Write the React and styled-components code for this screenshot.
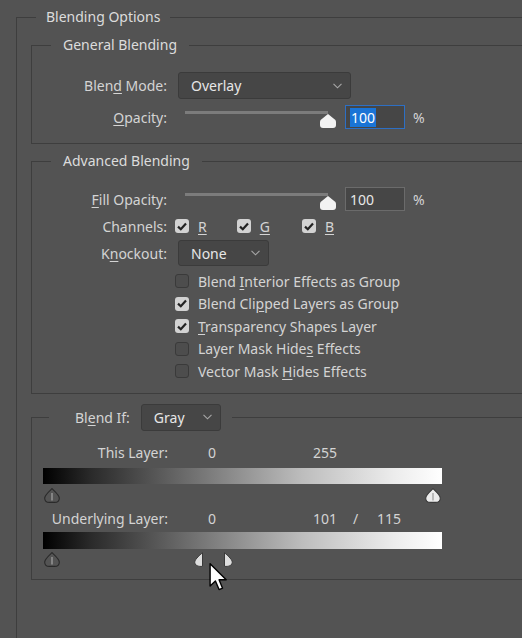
import styled, { createGlobalStyle } from "styled-components";

const Global = createGlobalStyle`
  html, body {
    margin: 0;
    background: #535353;
    overflow: hidden;
  }
  body {
    font-family: "Noto Sans", "Open Sans", sans-serif;
    font-size: 14px;
    color: #d4d4d4;
  }
`;

const Page = styled.div`
  position: relative;
  width: 522px;
  height: 638px;
  overflow: hidden;
  padding-top: 7px;
  box-sizing: border-box;
`;

const Outer = styled.fieldset`
  margin: 0 0 0 16px;
  width: 640px;
  min-height: 700px;
  border: 1px solid #3e3e3e;
  padding: 8px 0 0 14px;
  box-sizing: border-box;
`;

const Title = styled.legend`
  margin-left: 5px;
  padding: 0 10px;
  line-height: 20px;
  color: #dcdcdc;
`;

const Group = styled.fieldset`
  margin: ${(p) => p.$mt || 0}px 0 0 0;
  border: 1px solid #3e3e3e;
  padding: ${(p) => p.$pt}px 0 ${(p) => p.$pb}px ${(p) => p.$pl || 0}px;
  min-width: 0;
`;

const GroupTitle = styled.legend`
  margin-left: 19px;
  padding: 0 12px;
  line-height: 20px;
  color: #dcdcdc;
`;

const BlendIfLegend = styled.legend`
  margin-left: 17px;
  padding: 0 11px 0 26px;
  display: flex;
  align-items: center;
  gap: 11px;
`;

const Row = styled.div`
  display: flex;
  align-items: center;
  height: ${(p) => p.$h}px;
  margin-top: ${(p) => p.$mt || 0}px;
`;

const Label = styled.div`
  width: 135px;
  margin-right: 8px;
  text-align: right;
  white-space: nowrap;
`;

const Select = styled.div`
  display: flex;
  align-items: center;
  justify-content: space-between;
  box-sizing: border-box;
  width: ${(p) => p.$w}px;
  height: ${(p) => p.$h || 27}px;
  margin-left: ${(p) => p.$ml || 0}px;
  padding: 0 8px 0 12px;
  background: #464646;
  border: 1px solid #3b3b3b;
  border-radius: 3px;
  color: #e6e6e6;
`;

const Chevron = () => (
  <svg width="9" height="6" viewBox="0 0 9 6">
    <path d="M0.5 0.8 L4.5 4.8 L8.5 0.8" fill="none" stroke="#a8a8a8" strokeWidth="1.1" />
  </svg>
);

const SliderBox = styled.div`
  display: flex;
  flex-direction: column;
  width: 161px;
  height: 24px;
`;

const Track = styled.div`
  margin: 6px 0 0 10px;
  width: 143px;
  height: 3px;
  background: #7c7c7c;
`;

const SliderThumb = styled.svg`
  display: block;
  width: 16px;
  height: 14px;
`;

const NumInput = styled.div`
  display: flex;
  align-items: center;
  box-sizing: border-box;
  width: 60px;
  height: 24px;
  margin-left: 9px;
  padding-left: 4px;
  background: #464646;
  border: 1px solid ${(p) => (p.$focus ? "#2d6fc4" : "#6b6b6b")};
  color: #e8e8e8;
`;

const Selected = styled.span`
  background: #1a74d6;
  color: #ffffff;
  padding: 0 1px;
  line-height: 19px;
`;

const Percent = styled.span`
  margin-left: 8px;
`;

const Box = styled.div`
  box-sizing: border-box;
  width: 14px;
  height: 14px;
  border-radius: 3px;
  display: flex;
  align-items: center;
  justify-content: center;
  flex-shrink: 0;
  background: ${(p) => (p.$on ? "#d2d2d2" : "#4d4d4d")};
  border: ${(p) => (p.$on ? "none" : "1.5px solid #3a3a3a")};
`;

const Check = styled.label`
  display: flex;
  align-items: center;
  gap: 9px;
  white-space: nowrap;
  margin-right: ${(p) => p.$mr || 0}px;
`;

const Channel = styled.span`
  text-decoration: underline;
  text-underline-offset: 2px;
`;

const U = styled.u`
  text-underline-offset: 2px;
`;

const List = styled.div`
  display: flex;
  flex-direction: column;
  margin: 4px 0 0 143px;
`;

const ListRow = styled.div`
  height: 22.5px;
  display: flex;
  align-items: center;
`;

const Values = styled.div`
  display: grid;
  grid-template-columns: 136px 40px 105px 40px 24px 40px;
  align-items: center;
  height: 20px;
  margin-top: ${(p) => p.$mt || 0}px;
`;

const ValueLabel = styled.span`
  text-align: right;
  white-space: nowrap;
`;

const Gradient = styled.div`
  margin: ${(p) => p.$mt}px 0 0 11px;
  width: 399px;
  height: ${(p) => p.$h}px;
  background: linear-gradient(to right, #000 0%, #2a2a2a 12%, #777 40%, #bdbdbd 65%, #ececec 88%, #fff 100%);
`;

const ThumbRow = styled.div`
  position: relative;
  margin: ${(p) => p.$mt}px 0 0 11px;
  width: 399px;
  height: 15px;
`;

const Pin = styled.svg`
  position: absolute;
  top: 0;
`;

const Cursor = styled.svg`
  position: absolute;
  left: 209px;
  top: 563px;
`;

const DROP = "M8 0.7 C9 1.8 15.3 7 15.3 10.2 C15.3 12.8 13.2 14.4 10.6 14.4 L5.4 14.4 C2.8 14.4 0.7 12.8 0.7 10.2 C0.7 7 7 1.8 8 0.7 Z";

function Drop({ value, light }) {
  const x = 1 + (value / 255) * 381;
  return (
    <Pin width="16" height="15" viewBox="0 0 16 15" style={{ left: x }}>
      <path d={DROP} fill={light ? "#ececec" : "#545454"} stroke={light ? "#3c3c3c" : "#2a2a2a"} strokeWidth="1.1" />
      <line x1="8" y1="5" x2="8" y2="12.5" stroke={light ? "#8a8a8a" : "#b4b4b4"} strokeWidth="1" />
    </Pin>
  );
}

function HalfDrop({ value, side }) {
  const c = 9 + (value / 255) * 381;
  const left = side === "left";
  return (
    <Pin width="9" height="15" viewBox="0 0 9 15" style={{ left: left ? c - 9 : c }}>
      <path
        d={left
          ? "M8.5 0.7 L8.5 14.4 L5.9 14.4 C3.3 14.4 0.7 12.8 0.7 10.2 C0.7 7 7.5 1.8 8.5 0.7 Z"
          : "M0.5 0.7 L0.5 14.4 L3.1 14.4 C5.7 14.4 8.3 12.8 8.3 10.2 C8.3 7 1.5 1.8 0.5 0.7 Z"}
        fill="#dedede"
        stroke="#3a3a3a"
        strokeWidth="1"
      />
    </Pin>
  );
}

function Slider({ value }) {
  return (
    <SliderBox>
      <Track />
      <SliderThumb viewBox="0 0 16 14" style={{ marginLeft: 10 + 143 * value - 8 }}>
        <path d="M8 0 L14.8 5.6 Q16 6.6 16 8 L16 11 Q16 14 13 14 L3 14 Q0 14 0 11 L0 8 Q0 6.6 1.2 5.6 Z" fill="#f2f2f2" />
      </SliderThumb>
    </SliderBox>
  );
}

function CheckBox({ on }) {
  return (
    <Box $on={on}>
      {on && (
        <svg width="10" height="9" viewBox="0 0 10 9">
          <path d="M1 4.6 L3.8 7.2 L9 1.4" fill="none" stroke="#222" strokeWidth="2.2" />
        </svg>
      )}
    </Box>
  );
}

const options = [
  { on: false, text: <>Blend <U>I</U>nterior Effects as Group</> },
  { on: true, text: <>Blend Cli<U>p</U>ped Layers as Group</> },
  { on: true, text: <><U>T</U>ransparency Shapes Layer</> },
  { on: false, text: <>Layer Mask Hide<U>s</U> Effects</> },
  { on: false, text: <>Vector Mask <U>H</U>ides Effects</> },
];

export default function App() {
  return (
    <Page>
      <Global />
      <Outer>
        <Title>Blending Options</Title>

        <Group $pt={17} $pb={14}>
          <GroupTitle>General Blending</GroupTitle>
          <Row $h={27}>
            <Label>Blen<U>d</U> Mode:</Label>
            <Select $w={173} $ml={3}>
              Overlay <Chevron />
            </Select>
          </Row>
          <Row $h={24} $mt={6}>
            <Label><U>O</U>pacity:</Label>
            <Slider value={1} />
            <NumInput $focus>
              <Selected>100</Selected>
            </NumInput>
            <Percent>%</Percent>
          </Row>
        </Group>

        <Group $mt={7} $pt={16} $pb={10}>
          <GroupTitle>Advanced Blending</GroupTitle>
          <Row $h={24}>
            <Label><U>F</U>ill Opacity:</Label>
            <Slider value={1} />
            <NumInput>100</NumInput>
            <Percent>%</Percent>
          </Row>
          <Row $h={22} $mt={4}>
            <Label>Channels:</Label>
            <Check $mr={30}><CheckBox on /><Channel>R</Channel></Check>
            <Check $mr={32}><CheckBox on /><Channel>G</Channel></Check>
            <Check><CheckBox on /><Channel>B</Channel></Check>
          </Row>
          <Row $h={26} $mt={3}>
            <Label>K<U>n</U>ockout:</Label>
            <Select $w={91} $h={26} $ml={3}>
              None <Chevron />
            </Select>
          </Row>
          <List>
            {options.map((o, i) => (
              <ListRow key={i}>
                <Check><CheckBox on={o.on} /><span>{o.text}</span></Check>
              </ListRow>
            ))}
          </List>
        </Group>

        <Group $mt={10} $pt={12} $pb={12}>
          <BlendIfLegend>
            <span>Bl<U>e</U>nd If:</span>
            <Select $w={80}>
              Gray <Chevron />
            </Select>
          </BlendIfLegend>
          <Values>
            <ValueLabel>This Layer:</ValueLabel>
            <span />
            <span>0</span>
            <span>255</span>
          </Values>
          <Gradient $mt={5} $h={16} />
          <ThumbRow $mt={4}>
            <Drop value={0} />
            <Drop value={255} light />
          </ThumbRow>
          <Values $mt={6}>
            <ValueLabel>Underlying Layer:</ValueLabel>
            <span />
            <span>0</span>
            <span>101</span>
            <span>/</span>
            <span>115</span>
          </Values>
          <Gradient $mt={3} $h={17} />
          <ThumbRow $mt={3}>
            <Drop value={0} />
            <HalfDrop value={101} side="left" />
            <HalfDrop value={115} side="right" />
          </ThumbRow>
        </Group>
      </Outer>

      <Cursor width="19" height="28" viewBox="0 0 13 20">
        <path d="M0.5 0.5 L0.5 16.5 L4.3 12.9 L6.9 19 L9.4 18 L6.9 12 L12 12 Z" fill="#ffffff" stroke="#000000" strokeWidth="1" strokeLinejoin="round" />
      </Cursor>
    </Page>
  );
}
